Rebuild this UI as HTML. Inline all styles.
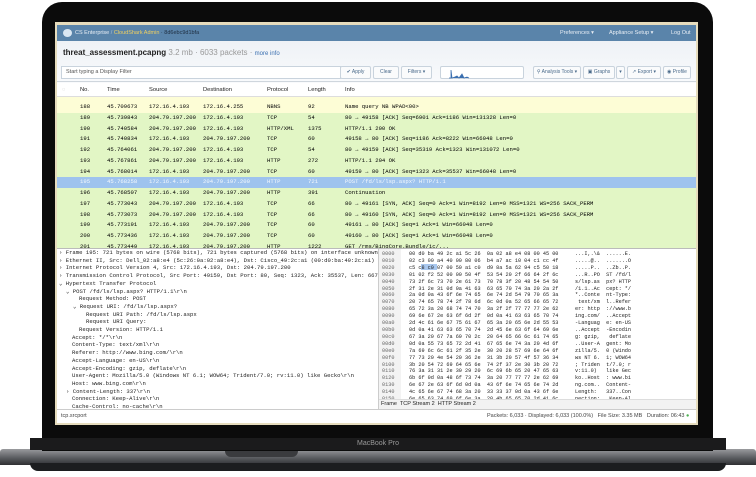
<!DOCTYPE html>
<html><head><meta charset="utf-8"><style>
*{margin:0;padding:0;box-sizing:border-box}
body{width:756px;height:477px;background:#fff;position:relative;overflow:hidden;font-family:"Liberation Sans",sans-serif}
.a{position:absolute}
.mono{font-family:"Liberation Mono",monospace}
.row{position:absolute;left:0;width:640px;height:10.75px;font-size:5.6px;line-height:10.75px;white-space:nowrap}
.row span{position:absolute}
.btn{position:absolute;top:66px;height:13px;border:1px solid #c9d3dd;border-radius:2px;background:#fafbfc;font-size:5px;color:#4a6a8a;line-height:11px;text-align:center}
.dl{position:absolute;font-size:5.6px;white-space:nowrap;color:#222;line-height:7.7px}
.hx{position:absolute;font-size:5.2px;white-space:pre;color:#222;line-height:6.9px}
</style></head><body>
<div class="a" style="left:0;top:449px;width:756px;height:16px;background:linear-gradient(#9a9b9e,#55575b 60%,#2f3033);border-radius:3px 3px 0 0"></div>
<div class="a" style="left:30px;top:463px;width:696px;height:8px;background:#1c1d1f;border-radius:0 0 30px 30px"></div>
<div class="a" style="left:225px;top:450px;width:73px;height:7px;background:#3a3b3e;border-radius:0 0 6px 6px"></div>
<div class="a" style="left:42px;top:2px;width:671px;height:449px;background:#0b0b0b;border-radius:20px 20px 0 0"></div>
<div class="a" style="left:30px;top:438px;width:696px;height:12px;background:#1b1b1c"></div>
<div class="a" style="left:0;top:440px;width:756px;text-align:center;color:#9a9a9a;font-size:7px">MacBook Pro</div>
<div class="a" style="left:55px;top:22px;width:643px;height:403px;background:#e6dcbd;overflow:hidden">
 <div class="a" style="left:2px;top:3px;width:639px;height:398px;background:#fff;overflow:hidden">
  <div class="a" style="left:0;top:0;width:639px;height:16px;background:#5a84aa;color:#e8eef5;font-size:5.5px;line-height:16px">
   <span class="a" style="left:6px;top:4px;width:9px;height:8px;background:#dbe7f2;border-radius:50%"></span>
   <span class="a" style="left:18px">CS Enterprise <span style="color:#b0c0d0">/</span> <span style="color:#f0d060">CloudShark Admin</span> <span style="color:#1e2e40">·  8d6ebc9d1bfa</span></span>
   <span class="a" style="left:503px">Preferences ▾</span><span class="a" style="left:552px">Appliance Setup ▾</span><span class="a" style="left:614px">Log Out</span>
  </div>
  <div class="a" style="left:0;top:16px;width:639px;height:42px;background:linear-gradient(#eef2f6,#f9fafc)"></div>
  <div class="a" style="left:6px;top:23px;font-size:8px;white-space:nowrap"><b style="color:#222">threat_assessment.pcapng</b> <span style="color:#999">3.2 mb · 6033 packets ·</span> <span style="color:#3a6fb0;font-size:6px">more info</span></div>
  <div class="a" style="left:4px;top:41px;width:280px;height:13px;border:1px solid #c9d3dd;background:#fff;font-size:5.5px;color:#555;line-height:11px;padding-left:4px">Start typing a Display Filter</div>
  <div class="btn" style="left:283px;top:41px;width:31px">✔ Apply</div>
  <div class="btn" style="left:316px;top:41px;width:26px">Clear</div>
  <div class="btn" style="left:344px;top:41px;width:31px">Filters ▾</div>
  <div class="a" style="left:383px;top:41px;width:84px;height:13px;border:1px solid #c9d3dd;border-radius:2px;background:#fff">
   <svg width="84" height="13"><path d="M8 11 L10 11 L10 3 L11 11 L14 10 L16 9 L18 11 L21 7 L23 11 L26 10 L28 11" stroke="#3a6fb0" fill="#3a6fb0" stroke-width="0.8"/></svg></div>
  <div class="btn" style="left:476px;top:41px;width:48px">⚲ Analysis Tools ▾</div>
  <div class="btn" style="left:526px;top:41px;width:32px">▣ Graphs</div>
  <div class="btn" style="left:559px;top:41px;width:9px">▾</div>
  <div class="btn" style="left:570px;top:41px;width:34px">↗ Export ▾</div>
  <div class="btn" style="left:606px;top:41px;width:28px">◉ Profile</div>
  <div class="a" style="left:0;top:56px;width:639px;height:1px;background:#cfd6dd"></div>
  <div class="a" style="left:0;top:59px;width:639px;height:13px;background:#fff;border-bottom:1px solid #ddd;font-size:5.8px;line-height:13px;color:#222">
   <span class="a" style="left:5px;color:#bbb">◌</span><span class="a" style="left:23px">No.</span><span class="a" style="left:50px">Time</span><span class="a" style="left:92px">Source</span><span class="a" style="left:146px">Destination</span><span class="a" style="left:210px">Protocol</span><span class="a" style="left:251px">Length</span><span class="a" style="left:288px">Info</span>
  </div>
  <div class="a mono" style="left:0;top:72px;width:639px;height:151px;overflow:hidden;background:#e2f6c5">
   <div style="position:absolute;top:-5.75px;left:0">
   <div class="row" style="top:0;background:#fdfdd6"></div>
   <div class="row" style="top:10.75px;background:#fdfdd6"><span style="left:23px">188</span><span style="left:50px">45.709673</span><span style="left:92px">172.16.4.193</span><span style="left:146px">172.16.4.255</span><span style="left:210px">NBNS</span><span style="left:251px">92</span><span style="left:288px">Name query NB WPAD&lt;00&gt;</span></div>
   <div class="row" style="top:21.5px"><span style="left:23px">189</span><span style="left:50px">45.739843</span><span style="left:92px">204.79.197.200</span><span style="left:146px">172.16.4.193</span><span style="left:210px">TCP</span><span style="left:251px">54</span><span style="left:288px">80 → 49158 [ACK] Seq=6901 Ack=1186 Win=131328 Len=0</span></div>
   <div class="row" style="top:32.25px"><span style="left:23px">190</span><span style="left:50px">45.740584</span><span style="left:92px">204.79.197.200</span><span style="left:146px">172.16.4.193</span><span style="left:210px">HTTP/XML</span><span style="left:251px">1375</span><span style="left:288px">HTTP/1.1 200 OK</span></div>
   <div class="row" style="top:43px"><span style="left:23px">191</span><span style="left:50px">45.740834</span><span style="left:92px">172.16.4.193</span><span style="left:146px">204.79.197.200</span><span style="left:210px">TCP</span><span style="left:251px">60</span><span style="left:288px">49158 → 80 [ACK] Seq=1186 Ack=8222 Win=66048 Len=0</span></div>
   <div class="row" style="top:53.75px"><span style="left:23px">192</span><span style="left:50px">45.764061</span><span style="left:92px">204.79.197.200</span><span style="left:146px">172.16.4.193</span><span style="left:210px">TCP</span><span style="left:251px">54</span><span style="left:288px">80 → 49159 [ACK] Seq=35319 Ack=1323 Win=131072 Len=0</span></div>
   <div class="row" style="top:64.5px"><span style="left:23px">193</span><span style="left:50px">45.767861</span><span style="left:92px">204.79.197.200</span><span style="left:146px">172.16.4.193</span><span style="left:210px">HTTP</span><span style="left:251px">272</span><span style="left:288px">HTTP/1.1 204 OK</span></div>
   <div class="row" style="top:75.25px"><span style="left:23px">194</span><span style="left:50px">45.768014</span><span style="left:92px">172.16.4.193</span><span style="left:146px">204.79.197.200</span><span style="left:210px">TCP</span><span style="left:251px">60</span><span style="left:288px">49159 → 80 [ACK] Seq=1323 Ack=35537 Win=66048 Len=0</span></div>
   <div class="row" style="top:86px;background:#9ec3ee;color:#f4f8fc"><span style="left:23px">195</span><span style="left:50px">45.768258</span><span style="left:92px">172.16.4.193</span><span style="left:146px">204.79.197.200</span><span style="left:210px">HTTP</span><span style="left:251px">721</span><span style="left:288px">POST /fd/ls/lsp.aspx? HTTP/1.1</span></div>
   <div class="row" style="top:96.75px"><span style="left:23px">196</span><span style="left:50px">45.768507</span><span style="left:92px">172.16.4.193</span><span style="left:146px">204.79.197.200</span><span style="left:210px">HTTP</span><span style="left:251px">391</span><span style="left:288px">Continuation</span></div>
   <div class="row" style="top:107.5px"><span style="left:23px">197</span><span style="left:50px">45.773043</span><span style="left:92px">204.79.197.200</span><span style="left:146px">172.16.4.193</span><span style="left:210px">TCP</span><span style="left:251px">66</span><span style="left:288px">80 → 49161 [SYN, ACK] Seq=0 Ack=1 Win=8192 Len=0 MSS=1321 WS=256 SACK_PERM</span></div>
   <div class="row" style="top:118.25px"><span style="left:23px">198</span><span style="left:50px">45.773073</span><span style="left:92px">204.79.197.200</span><span style="left:146px">172.16.4.193</span><span style="left:210px">TCP</span><span style="left:251px">66</span><span style="left:288px">80 → 49160 [SYN, ACK] Seq=0 Ack=1 Win=8192 Len=0 MSS=1321 WS=256 SACK_PERM</span></div>
   <div class="row" style="top:129px"><span style="left:23px">199</span><span style="left:50px">45.773191</span><span style="left:92px">172.16.4.193</span><span style="left:146px">204.79.197.200</span><span style="left:210px">TCP</span><span style="left:251px">60</span><span style="left:288px">49161 → 80 [ACK] Seq=1 Ack=1 Win=66048 Len=0</span></div>
   <div class="row" style="top:139.75px"><span style="left:23px">200</span><span style="left:50px">45.773436</span><span style="left:92px">172.16.4.193</span><span style="left:146px">204.79.197.200</span><span style="left:210px">TCP</span><span style="left:251px">60</span><span style="left:288px">49160 → 80 [ACK] Seq=1 Ack=1 Win=66048 Len=0</span></div>
   <div class="row" style="top:150.5px"><span style="left:23px">201</span><span style="left:50px">45.773449</span><span style="left:92px">172.16.4.193</span><span style="left:146px">204.79.197.200</span><span style="left:210px">HTTP</span><span style="left:251px">1222</span><span style="left:288px">GET /rms/BingCore.Bundle/ic/...</span></div>
   </div>
  </div>
  <div class="a" style="left:0;top:223px;width:639px;height:1px;background:#bbb"></div>
  <div class="a mono" style="left:0;top:224px;width:321px;height:160px;overflow:hidden">
   <div class="dl" style="left:2px;top:0">› Frame 195: 721 bytes on wire (5768 bits), 721 bytes captured (5768 bits) on interface unknown, id 0</div>
   <div class="dl" style="left:2px;top:7.7px">› Ethernet II, Src: Dell_02:a8:e4 (5c:26:0a:02:a8:e4), Dst: Cisco_49:2c:a1 (00:d0:ba:49:2c:a1)</div>
   <div class="dl" style="left:2px;top:15.4px">› Internet Protocol Version 4, Src: 172.16.4.193, Dst: 204.79.197.200</div>
   <div class="dl" style="left:2px;top:23.1px">› Transmission Control Protocol, Src Port: 49159, Dst Port: 80, Seq: 1323, Ack: 35537, Len: 667</div>
   <div class="dl" style="left:2px;top:30.8px">⌄ Hypertext Transfer Protocol</div>
   <div class="dl" style="left:9px;top:38.5px">⌄ POST /fd/ls/lsp.aspx? HTTP/1.1\r\n</div>
   <div class="dl" style="left:22px;top:46.2px">Request Method: POST</div>
   <div class="dl" style="left:16px;top:53.9px">⌄ Request URI: /fd/ls/lsp.aspx?</div>
   <div class="dl" style="left:29px;top:61.6px">Request URI Path: /fd/ls/lsp.aspx</div>
   <div class="dl" style="left:29px;top:69.3px">Request URI Query:</div>
   <div class="dl" style="left:22px;top:77px">Request Version: HTTP/1.1</div>
   <div class="dl" style="left:15px;top:84.7px">Accept: */*\r\n</div>
   <div class="dl" style="left:15px;top:92.4px">Content-Type: text/xml\r\n</div>
   <div class="dl" style="left:15px;top:100.1px">Referer: http://www.bing.com/\r\n</div>
   <div class="dl" style="left:15px;top:107.8px">Accept-Language: en-US\r\n</div>
   <div class="dl" style="left:15px;top:115.5px">Accept-Encoding: gzip, deflate\r\n</div>
   <div class="dl" style="left:15px;top:123.2px">User-Agent: Mozilla/5.0 (Windows NT 6.1; WOW64; Trident/7.0; rv:11.0) like Gecko\r\n</div>
   <div class="dl" style="left:15px;top:130.9px">Host: www.bing.com\r\n</div>
   <div class="dl" style="left:9px;top:138.6px">› Content-Length: 337\r\n</div>
   <div class="dl" style="left:15px;top:146.3px">Connection: Keep-Alive\r\n</div>
   <div class="dl" style="left:15px;top:154px">Cache-Control: no-cache\r\n</div>
  </div>
  <div class="a" style="left:321px;top:224px;width:1px;height:160px;background:#ccc"></div>
  <div class="a mono" style="left:322px;top:224px;width:317px;height:150px;overflow:hidden">
   <div class="a" style="left:0;top:0;width:22px;height:150px;background:#f3f3f3"></div>
   <div class="a" style="left:42px;top:15px;width:16px;height:6px;background:#a9c8ef"></div>
   <div class="hx" style="left:3px;top:2px;color:#666">0000
0010
0020
0030
0040
0050
0060
0070
0080
0090
00a0
00b0
00c0
00d0
00e0
00f0
0100
0110
0120
0130
0140
0150</div>
   <div class="hx" style="left:30px;top:2px">00 d0 ba 49 2c a1 5c 26  0a 02 a8 e4 08 00 45 00
02 c3 00 a4 40 00 80 06  b4 a7 ac 10 04 c1 cc 4f
c5 c8 c0 07 00 50 a1 c0  d9 8a 5a 62 94 c5 50 18
01 02 f2 52 00 00 50 4f  53 54 20 2f 66 64 2f 6c
73 2f 6c 73 70 2e 61 73  70 78 3f 20 48 54 54 50
2f 31 2e 31 0d 0a 41 63  63 65 70 74 3a 20 2a 2f
2a 0d 0a 43 6f 6e 74 65  6e 74 2d 54 79 70 65 3a
20 74 65 78 74 2f 78 6d  6c 0d 0a 52 65 66 65 72
65 72 3a 20 68 74 74 70  3a 2f 2f 77 77 77 2e 62
69 6e 67 2e 63 6f 6d 2f  0d 0a 41 63 63 65 70 74
2d 4c 61 6e 67 75 61 67  65 3a 20 65 6e 2d 55 53
0d 0a 41 63 63 65 70 74  2d 45 6e 63 6f 64 69 6e
67 3a 20 67 7a 69 70 2c  20 64 65 66 6c 61 74 65
0d 0a 55 73 65 72 2d 41  67 65 6e 74 3a 20 4d 6f
7a 69 6c 6c 61 2f 35 2e  30 20 28 57 69 6e 64 6f
77 73 20 4e 54 20 36 2e  31 3b 20 57 4f 57 36 34
3b 20 54 72 69 64 65 6e  74 2f 37 2e 30 3b 20 72
76 3a 31 31 2e 30 29 20  6c 69 6b 65 20 47 65 63
6b 6f 0d 0a 48 6f 73 74  3a 20 77 77 77 2e 62 69
6e 67 2e 63 6f 6d 0d 0a  43 6f 6e 74 65 6e 74 2d
4c 65 6e 67 74 68 3a 20  33 33 37 0d 0a 43 6f 6e
6e 65 63 74 69 6f 6e 3a  20 4b 65 65 70 2d 41 6c</div>
   <div class="hx" style="left:196px;top:2px">...I,.\&  ......E.
.....@..  .......O
.....P..  ..Zb..P.
...R..PO  ST /fd/l
s/lsp.as  px? HTTP
/1.1..Ac  cept: */
*..Conte  nt-Type:
 text/xm  l..Refer
er: http  ://www.b
ing.com/  ..Accept
-Languag  e: en-US
..Accept  -Encodin
g: gzip,   deflate
..User-A  gent: Mo
zilla/5.  0 (Windo
ws NT 6.  1; WOW64
; Triden  t/7.0; r
v:11.0)   like Gec
ko..Host  : www.bi
ng.com..  Content-
Length:   337..Con
nection:   Keep-Al</div>
  </div>
  <div class="a" style="left:322px;top:374px;width:317px;height:10px;background:#f2f2f2;border-top:1px solid #ddd;font-size:5.5px;line-height:9px;color:#222;padding-left:2px">Frame &nbsp;TCP Stream 2 &nbsp;HTTP Stream 2</div>
  <div class="a" style="left:0;top:384px;width:639px;height:14px;background:#fff;border-top:1px solid #ccc;font-size:5.5px;line-height:12px;color:#444">
   <span class="a" style="left:4px">tcp.srcport</span>
   <span class="a" style="left:430px;white-space:nowrap">Packets: 6,033 · Displayed: 6,033 (100.0%) &nbsp; File Size: 3.35 MB &nbsp; Duration: 06:43 <span style="color:#4caf50">●</span></span>
  </div>
 </div>
</div>
</body></html>
